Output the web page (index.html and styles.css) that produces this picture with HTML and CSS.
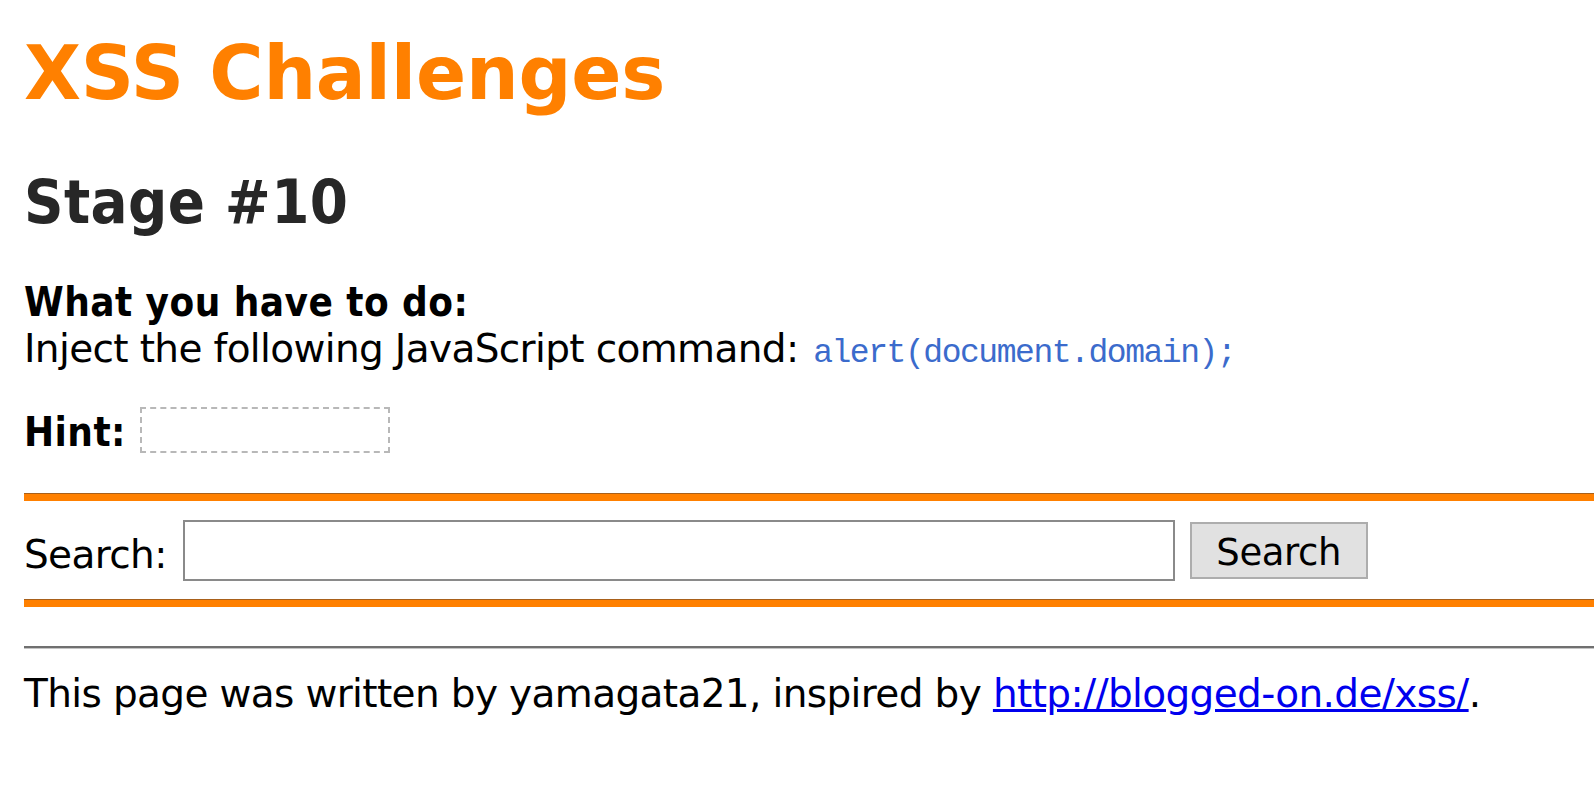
FILE: index.html
```html
<!DOCTYPE html>
<html lang="en">
<head>
<meta charset="utf-8">
<title>XSS Challenges (by yamagata21) - Stage #10</title>
<link rel="stylesheet" href="styles.css">
</head>
<body>
<h1 class="title">XSS Challenges</h1>
<h2 class="stage">Stage #10</h2>
<p class="task"><b class="strong">What you have to do:</b><br>Inject the following JavaScript command: <code class="cmd">alert(document.domain);</code></p>
<div class="hint"><b class="strong hint-label">Hint:</b><span class="hint-box"></span></div>
<div class="rule"></div>
<form class="search-row" action="#">
  <label class="search-label" for="q">Search:</label>
  <input class="search-input" id="q" type="text" name="p1">
  <button class="search-btn" type="button">Search</button>
</form>
<div class="rule"></div>
<div class="sep"></div>
<p class="footer">This page was written by yamagata21, inspired by <a class="link" href="#">http://blogged-on.de/xss/</a>.</p>
</body>
</html>
```
FILE: styles.css
```css
html, body {
  margin: 0;
  padding: 0;
  background: #ffffff;
}
body {
  padding-left: 24px;
  font-family: "DejaVu Sans", sans-serif;
  font-size: 39px;
  letter-spacing: -0.64px;
  color: #000;
  overflow: hidden;
}
.title {
  margin: 28px 0 0 0;
  font-family: "DejaVu Sans", sans-serif;
  font-weight: bold;
  font-size: 74px;
  line-height: 90px;
  letter-spacing: -0.2px;
  color: #ff8000;
}
.stage {
  margin: 49px 0 0 0;
  font-family: "DejaVu Sans Condensed", "DejaVu Sans", sans-serif;
  font-stretch: condensed;
  font-weight: bold;
  font-size: 61px;
  line-height: 70px;
  letter-spacing: 0.4px;
  color: #272727;
}
.task {
  margin: 42px 0 0 0;
  line-height: 46px;
}
.strong {
  font-family: "DejaVu Sans Condensed", "DejaVu Sans", sans-serif;
  font-stretch: condensed;
  font-weight: bold;
  font-size: 40px;
  letter-spacing: 0.45px;
}
.cmd {
  font-family: "Liberation Mono", monospace;
  font-size: 33px;
  line-height: 20px;
  letter-spacing: -1.45px;
  margin-left: 3px;
  color: #3b6bcc;
}
.hint {
  margin: 35px 0 40px 0;
  display: flex;
  align-items: center;
  gap: 14px;
  height: 46px;
}
.hint-label {
  line-height: 46px;
  padding-top: 3px;
}
.hint-box {
  display: block;
  width: 250px;
  height: 46px;
  box-sizing: border-box;
  border: 2px dashed #b8b8b8;
}
.rule {
  height: 7px;
  background: #ff8000;
  border-top: 1px solid #a8601a;
}
.search-row {
  margin: 0;
  display: flex;
  align-items: center;
  padding: 19px 0 18px 0;
  height: 61px;
}
.search-label {
  align-self: flex-start;
  margin-top: 12px;
  line-height: 46px;
  margin-right: 16px;
}
.search-input {
  width: 992px;
  height: 61px;
  box-sizing: border-box;
  margin: 0;
  border: 2px solid #8a8a8a;
  background: #fff;
  font-size: 36px;
}
.search-btn {
  margin-left: 15px;
  width: 178px;
  height: 57px;
  box-sizing: border-box;
  border: 2px solid #adadad;
  background: #e1e1e1;
  font-family: "DejaVu Sans", sans-serif;
  font-size: 37px;
  letter-spacing: -0.4px;
  color: #000;
  padding: 4px 0 0 0;
  line-height: 44px;
}
.sep {
  margin-top: 39px;
  border-top: 2px solid #707070;
  border-bottom: 1px solid #c4c4c4;
}
.footer {
  margin: 22px 0 0 0;
  line-height: 46px;
}
.link {
  color: #0000ee;
}
```
